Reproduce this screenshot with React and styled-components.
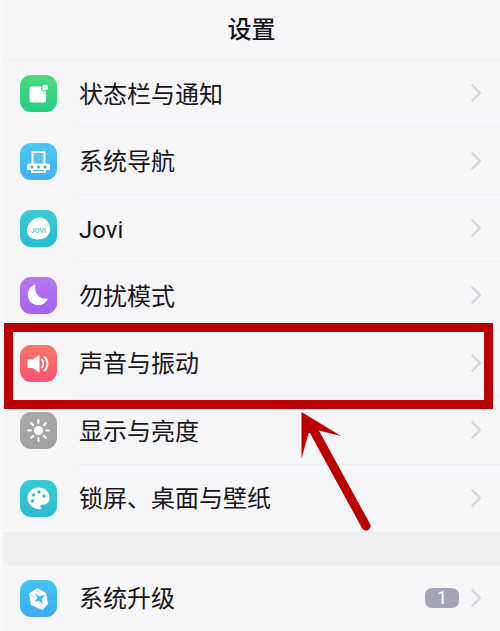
import React from 'react';
import styled, { createGlobalStyle } from 'styled-components';

const GlobalStyle = createGlobalStyle`
  * {
    box-sizing: border-box;
  }

  body {
    margin: 0;
    background: #f6f5f8;
    color: #17171a;
    font-family: Roboto, 'Noto Sans CJK SC', sans-serif;
  }
`;

const Page = styled.div`
  overflow: hidden;
  border-left: 3px solid #faf9fb;
`;

const Header = styled.header`
  display: flex;
  align-items: center;
  justify-content: center;
  height: 60px;
  border-bottom: 1px solid #eeedf1;
`;

const Title = styled.h1`
  margin: 0;
  font-size: 24px;
  font-weight: 500;
  line-height: 32px;
`;

const List = styled.ul`
  display: grid;
  grid-auto-rows: 1fr;
  min-height: ${({ $height }) => $height};
  margin: 0;
  padding: 0;
  list-style: none;
`;

const Item = styled.li`
  position: relative;
  display: flex;
`;

const RowButton = styled.button`
  display: flex;
  flex: 1;
  align-items: center;
  gap: 22px;
  padding: 0 0 0 17px;
  border: 0;
  background: none;
  color: inherit;
  font: inherit;
  text-align: left;
  cursor: pointer;
`;

const RowBody = styled.span`
  display: flex;
  flex: 1;
  align-items: center;
  align-self: stretch;
  gap: 11px;
  padding-right: 18px;
  border-bottom: 1px solid ${({ $last }) => ($last ? 'transparent' : '#eeedf1')};
`;

const Label = styled.span`
  flex: 1;
  padding-top: 3px;
  font-size: 24px;
  line-height: 32px;
`;

const Badge = styled.span`
  width: 34px;
  border-radius: 7px;
  background: #a4a4b4;
  color: #fff;
  font-size: 18px;
  line-height: 20px;
  text-align: center;
`;

const Divider = styled.div`
  height: 33px;
  border-top: 1px solid #eae9ec;
  background: #efeef1;
`;

const Highlight = styled.span`
  position: absolute;
  inset: -7px 7px -12px 1px;
  z-index: 1;
  border: 9px solid #b90003;
  pointer-events: none;
`;

const Arrow = styled.svg`
  position: absolute;
  top: 81px;
  left: 297px;
  z-index: 1;
  pointer-events: none;
`;

const Tile = ({ id, from, to, children }) => (
  <svg width="37" height="37" viewBox="0 0 37 37" aria-hidden="true">
    <defs>
      <linearGradient id={id} x1="0" y1="0" x2="0" y2="1">
        <stop offset="0" stopColor={from} />
        <stop offset="1" stopColor={to} />
      </linearGradient>
    </defs>
    <rect width="37" height="37" rx="11" fill={`url(#${id})`} />
    {children}
  </svg>
);

const StatusIcon = () => (
  <Tile id="status" from="#4fda7d" to="#22cf80">
    <rect x="9.5" y="11.5" width="16.5" height="16" rx="2" fill="#fff" />
    <circle cx="25" cy="12.5" r="4" fill="#35d47e" />
    <circle cx="25" cy="12.5" r="3" fill="#e9fbf0" />
  </Tile>
);

const NavigationIcon = () => (
  <Tile id="navigation" from="#4ac9f2" to="#43aef8">
    <path d="M12.5 22V9h12v13" fill="#62c0f2" stroke="#fff" strokeWidth="2" />
    <path d="M8.5 20.5h20A1.5 1.5 0 0 1 30 22v5h-4v3H11v-3H7v-5a1.500 1.500 0 0 1 1.500-1.500z" fill="#fff" />
    <g fill="#559fae">
      <circle cx="12" cy="24" r="1.500" />
      <circle cx="18.500" cy="24" r="1.500" />
      <circle cx="25" cy="24" r="1.500" />
    </g>
    <path d="M13 27.500h11" stroke="#50b8f2" strokeWidth="1.200" />
  </Tile>
);

const JoviIcon = () => (
  <Tile id="jovi" from="#3ccbd2" to="#28bed1">
    <path d="M20 7.500c6 0 10 5.500 10 11.500 0 6.500-5 10.500-12 10.500S7 26 7 20.500C7 13.500 13.500 7.500 20 7.500z" fill="#fff" />
    <text x="18.500" y="22.500" textAnchor="middle" fontSize="7" fontWeight="700" fill="#68cbd0">JOVI</text>
  </Tile>
);

const MoonIcon = () => (
  <Tile id="moon" from="#b878ee" to="#a561f6">
    <path d="M15.500 7.500a10.500 10.500 0 1 0 12.500 14C20.500 23.500 13.500 16.500 15.500 7.500z" fill="#fff" />
  </Tile>
);

const SoundIcon = () => (
  <Tile id="sound" from="#fa7569" to="#f95773">
    <path d="M7.500 14.500h5l7-4.500v17.500l-7-4.500h-5z" fill="#fff" />
    <path d="M22 15c1.800 2 1.800 5.500 0 7.500M24.500 12c4 3.500 4 10 0 13.500" fill="none" stroke="#fff" strokeWidth="1.800" strokeLinecap="round" />
  </Tile>
);

const BrightnessIcon = () => (
  <Tile id="brightness" from="#aaaaac" to="#a0a0a3">
    <circle cx="18.500" cy="18.500" r="4.500" fill="#fff" />
    <g stroke="#fff" strokeWidth="2" strokeLinecap="round">
      {[0, 45, 90, 135, 180, 225, 270, 315].map((angle) => (
        <path key={angle} d="M18.500 8v3" transform={`rotate(${angle} 18.500 18.500)`} />
      ))}
    </g>
  </Tile>
);

const PaletteIcon = () => (
  <Tile id="palette" from="#36ccd2" to="#2cbbd0">
    <path d="M18.500 7.500c6.500 0 11 4.500 11 10.500 0 4-2.500 6.500-6 6.500-2.500 0-3.500 1-3 2.500.4 1.200 1.500 2 1.500 2-8 1-14.500-4-14.500-11 0-6 4.800-10.500 11-10.500z" fill="#fff" />
    <g fill="#42b9bf">
      <circle cx="12.500" cy="21" r="1.700" />
      <circle cx="13.500" cy="15" r="1.700" />
      <circle cx="19" cy="12" r="1.700" />
      <circle cx="24" cy="16" r="1.700" />
    </g>
  </Tile>
);

const UpgradeIcon = () => (
  <Tile id="upgrade" from="#42c4ef" to="#3dabf9">
    <path d="M17.500 8 26 13l2 11-5.500 6L11 25 9 13.500z" fill="#fff" />
    <path d="m15 13 4 3.500 6-1.500-3 4 .5 5.500-3-3.500-5 .5 3-3.500z" fill="#46b6ef" />
    <path d="m9.500 14 8 4M19.500 21l2.500 8M19 16l-1-7" stroke="#9bd9f7" strokeWidth=".8" />
  </Tile>
);

const Chevron = () => (
  <svg width="12" height="20" viewBox="0 0 12 20" fill="none" aria-hidden="true">
    <path d="m1.500 1.500 8.500 8.500-8.500 8.500" stroke="#d2d1d5" strokeWidth="2" />
  </svg>
);

const settings = [
  { label: '状态栏与通知', Icon: StatusIcon },
  { label: '系统导航', Icon: NavigationIcon },
  { label: 'Jovi', Icon: JoviIcon },
  { label: '勿扰模式', Icon: MoonIcon },
  { label: '声音与振动', Icon: SoundIcon, marked: true },
  { label: '显示与亮度', Icon: BrightnessIcon },
  { label: '锁屏、桌面与壁纸', Icon: PaletteIcon },
];

const system = [{ label: '系统升级', Icon: UpgradeIcon, count: 1 }];

const SettingsList = ({ items, height }) => (
  <List $height={height}>
    {items.map(({ label, Icon, count, marked }, index) => (
      <Item key={label}>
        <RowButton type="button">
          <Icon />
          <RowBody $last={index === items.length - 1}>
            <Label>{label}</Label>
            {count && <Badge>{count}</Badge>}
            <Chevron />
          </RowBody>
        </RowButton>
        {marked && (
          <>
            <Highlight />
            <Arrow width="75" height="125" viewBox="0 0 75 125" aria-hidden="true">
              <path d="M14 20 66 115" stroke="#b90003" strokeWidth="9" strokeLinecap="round" />
              <path d="M1.500 1 41 25l-24.500-6-8 3.500L1.500 47.500z" fill="#b90003" />
            </Arrow>
          </>
        )}
      </Item>
    ))}
  </List>
);

const App = () => (
  <>
    <GlobalStyle />
    <Page>
      <Header>
        <Title>设置</Title>
      </Header>
      <main>
        <SettingsList items={settings} height="472px" />
        <Divider />
        <SettingsList items={system} height="66px" />
      </main>
    </Page>
  </>
);

export default App;
